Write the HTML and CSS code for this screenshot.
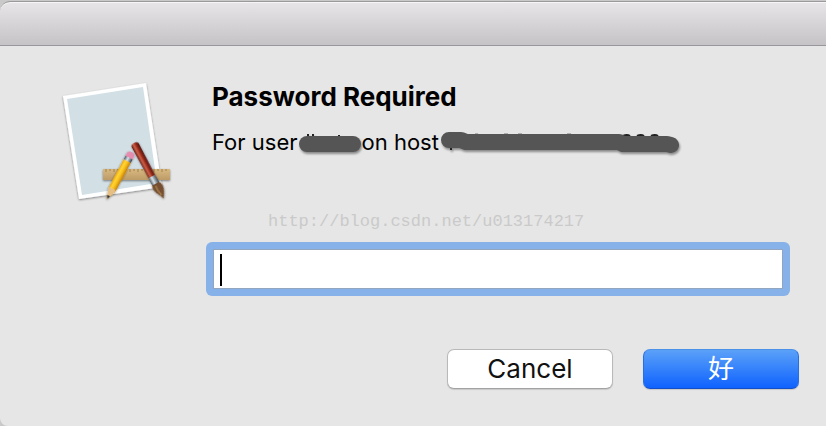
FILE: index.html
```html
<!DOCTYPE html>
<html lang="en">
<head>
<meta charset="utf-8">
<meta name="viewport" content="width=device-width, initial-scale=1">
<title>Password Required</title>
<link rel="stylesheet" href="styles.css">
</head>
<body>
<main class="window">
  <header class="titlebar"></header>
  <form class="dialog">
    <svg class="app-icon" width="120" height="128" viewBox="0 0 120 128" aria-hidden="true">
      <defs>
        <filter id="shadow" x="-20%" y="-20%" width="140%" height="140%">
          <feDropShadow dx="0" dy="1" stdDeviation="1.3" flood-color="#000" flood-opacity=".45"/>
        </filter>
        <linearGradient id="ruler" x1="0" y1="0" x2="0" y2="1">
          <stop offset="0" stop-color="#d9b982"/><stop offset="1" stop-color="#bd9b66"/>
        </linearGradient>
        <linearGradient id="pencil" x1="0" y1="0" x2="1" y2="0">
          <stop offset="0" stop-color="#e9a50d"/><stop offset=".3" stop-color="#ffd535"/><stop offset=".6" stop-color="#f8bf1b"/><stop offset="1" stop-color="#c47f0a"/>
        </linearGradient>
        <linearGradient id="handle" x1="0" y1="0" x2="1" y2="0">
          <stop offset="0" stop-color="#5e150e"/><stop offset=".35" stop-color="#d0634c"/><stop offset=".6" stop-color="#9d2d1d"/><stop offset="1" stop-color="#4a100a"/>
        </linearGradient>
        <linearGradient id="metal" x1="0" y1="0" x2="1" y2="0">
          <stop offset="0" stop-color="#465460"/><stop offset=".4" stop-color="#dce6ec"/><stop offset="1" stop-color="#35414a"/>
        </linearGradient>
      </defs>
      <g filter="url(#shadow)">
        <path d="M3 16 86 3 102 107 19 119Z" fill="#fff"/>
      </g>
      <path d="M7 19 83 7 97 103 22 115Z" fill="#d2dfe5"/>
      <g filter="url(#shadow)">
        <path d="M43 89H110V100H43Z" fill="url(#ruler)"/>
        <path d="M46 89v3m4-3v2m4-2v3m4-3v2m4-2v3m4-3v2m4-2v3m4-3v2m4-2v3m4-3v2m4-2v3m4-3v2m4-2v3m4-3v2m4-2v3m4-3v2" stroke="#a07e4a" stroke-width="1"/>
      </g>
      <g filter="url(#shadow)" transform="translate(71 74) rotate(28)">
        <path d="M-4 7H4V40L0 51-4 40Z" fill="url(#pencil)"/>
        <path d="M-4 40Q-2 38-1 40Q1 38 4 40L0 51Z" fill="#e6bf85"/>
        <path d="M-1.500 47H1.500L0 51Z" fill="#302b28"/>
        <path d="M-4 4H4V8H-4Z" fill="url(#metal)"/>
        <path d="M-4 4V1Q-4-2 0-2T4 1V4Z" fill="#e58caf"/>
      </g>
      <g filter="url(#shadow)" transform="translate(74 63) rotate(-28)">
        <path d="M-4 3Q-4 0 0 0T4 3L3.500 38H-3.500Z" fill="url(#handle)"/>
        <path d="M-3.500 38H3.500L4 46H-4Z" fill="url(#metal)"/>
        <path d="M-4 46H4C7 51 5 56 0 63C-1 57-7 53-4 46Z" fill="#765030"/>
        <path d="M-1 48Q-2 53 0 59" fill="none" stroke="#a47b4b" stroke-width="1.500"/>
      </g>
    </svg>
    <div class="content">
      <h1>Password Required</h1>
      <label class="prompt" for="password">
        <span>For user</span>
        <svg class="mark" width="64" height="24" viewBox="0 0 64 24" aria-hidden="true">
          <path d="M10 4v4M15 4v2M41 5v3" stroke="#222" stroke-width="2"/>
          <path d="M9 14H55" stroke="#555" stroke-width="16" stroke-linecap="round"/>
        </svg>
        <span class="host">on host</span>
        <svg class="mark" width="242" height="24" viewBox="0 0 242 24" aria-hidden="true">
          <path d="M36 4h3M65 4h4M79 4h4M128 4h4" stroke="#777" stroke-width="1"/>
          <path d="M12 17v3M173 5h5M184 6q4-2 7 0M198 6q4-2 7 0M212 6q4-2 7 0" fill="none" stroke="#222" stroke-width="2"/>
          <path d="M10 10H22L27 12H180L184 14H228L232 15" fill="none" stroke="#555" stroke-width="16" stroke-linecap="round" stroke-linejoin="round"/>
        </svg>
      </label>
      <p class="watermark">http://blog.csdn.net/u013174217</p>
      <div class="field">
        <input id="password" type="password">
        <span class="caret"></span>
      </div>
      <div class="actions">
        <button class="cancel" type="button">Cancel</button>
        <button class="confirm" type="button">好</button>
      </div>
    </div>
  </form>
</main>
</body>
</html>
```
FILE: styles.css
```css
* { box-sizing: border-box; }

body {
  margin: 0;
  background: #c9c9c9;
  color: #000;
  font-family: Inter, "Noto Sans CJK SC", sans-serif;
}

.window {
  min-height: 100vh;
  padding-top: 1px;
}

.titlebar {
  height: 45px;
  border-top: 1px solid #9b999b;
  border-bottom: 1px solid #98969a;
  border-radius: 10px 0 0 0;
  background: linear-gradient(#e7e5e7, #c6c3c7);
  box-shadow: inset 0 1px #f5f5f5;
}

.dialog {
  display: flex;
  min-height: calc(100vh - 46px);
  padding: 34px 27px 36px 60px;
  background: #e6e6e6;
  border-radius: 0 0 0 8px;
}

.app-icon { flex: none; }

.content {
  flex: 1;
  min-width: 0;
  padding-left: 32px;
}

h1 {
  margin: 0;
  font-size: 26px;
  line-height: 34px;
}

.prompt {
  display: flex;
  align-items: center;
  margin-top: 12px;
  font-size: 22px;
  line-height: 32px;
  white-space: nowrap;
}

.mark {
  flex: none;
  filter: drop-shadow(1px 2px 1px #0006);
}

.watermark {
  margin: 52px 0 0 56px;
  color: #cacaca;
  font-family: "Liberation Mono", monospace;
  font-size: 17px;
  line-height: 24px;
}

.field {
  position: relative;
  margin: 8px 9px 0 -6px;
  padding: 7px;
  border-radius: 6px;
  background: #86b2e9;
}

input {
  display: block;
  width: 100%;
  height: 40px;
  padding: 4px 8px;
  border: 1px solid #92a6bf;
  border-radius: 0;
  outline: 0;
  background: #fff;
  font: inherit;
  font-size: 26px;
}

.caret {
  position: absolute;
  top: 12px;
  left: 14px;
  width: 2px;
  height: 32px;
  background: #000;
}

.actions {
  display: flex;
  justify-content: flex-end;
  gap: 30px;
  margin-top: 53px;
}

button {
  height: 40px;
  padding: 0;
  border: 1px solid #b9b9b9;
  border-radius: 7px;
  font: inherit;
  font-size: 26px;
  line-height: 38px;
}

.cancel {
  width: 166px;
  border-bottom-color: #a3a3a3;
  background: #fff;
  color: #111;
  box-shadow: 0 1px 1px #0002;
}

.confirm {
  width: 156px;
  border-color: #4b91e8 #2770e4 #134fc7;
  background: linear-gradient(#5ba1f8, #0f62ff);
  color: #fff;
  box-shadow: 0 1px 1px #0002;
}
```
